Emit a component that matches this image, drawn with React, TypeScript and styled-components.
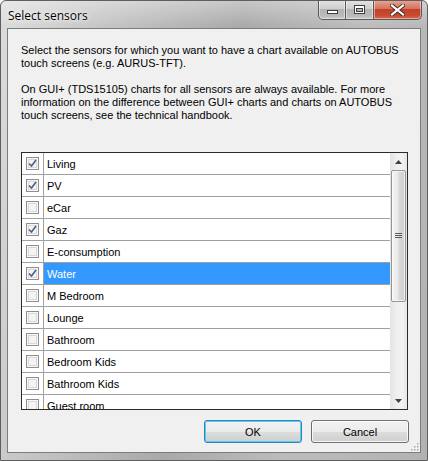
import React from 'react';
import styled, { createGlobalStyle } from 'styled-components';

const GlobalStyle = createGlobalStyle`
  html, body {
    margin: 0;
    padding: 0;
    background: #ffffff;
  }
  body {
    font-family: "Liberation Sans", Arial, sans-serif;
  }
`;

const Window = styled.div`
  position: relative;
  width: 428px;
  height: 461px;
  box-sizing: border-box;
  display: flex;
  flex-direction: column;
  border: 1px solid #5e5e5e;
  border-radius: 6px 6px 0 0;
  overflow: hidden;
  background:
    linear-gradient(180deg, rgba(255, 255, 255, 0.35) 0px, rgba(255, 255, 255, 0) 26px),
    linear-gradient(100deg, #dcdcdc 0%, #c4c4c4 22%, #a9a9a9 48%, #bcbcbc 72%, #b2b2b2 100%);
`;

const TitleBar = styled.div`
  height: 27px;
  display: flex;
  align-items: flex-start;
  flex-shrink: 0;
`;

const Title = styled.div`
  padding: 6px 0 0 7px;
  font-family: "Open Sans", "Liberation Sans", sans-serif;
  font-size: 12px;
  color: #000;
  text-shadow: 0 0 6px rgba(255, 255, 255, 0.95), 0 0 2px rgba(255, 255, 255, 0.9);
`;

const CaptionButtons = styled.div`
  margin: -1px 5px 0 auto;
  display: flex;
  height: 20px;
`;

const CaptionButton = styled.div<{ $kind: 'min' | 'max' | 'close' }>`
  box-sizing: border-box;
  height: 20px;
  width: ${p => (p.$kind === 'close' ? 48 : 28)}px;
  display: flex;
  align-items: center;
  justify-content: center;
  border: 1px solid #5a5a5a;
  border-top: none;
  border-left: ${p => (p.$kind === 'min' ? '1px solid #5a5a5a' : 'none')};
  border-radius: ${p =>
    p.$kind === 'min' ? '0 0 0 5px' : p.$kind === 'close' ? '0 0 5px 0' : '0'};
  box-shadow: inset 0 0 0 1px rgba(255, 255, 255, 0.45);
  background: ${p =>
    p.$kind === 'close'
      ? 'linear-gradient(180deg, #e7a898 0%, #d6735d 45%, #c1412a 50%, #c8492f 80%, #d86a4b 100%)'
      : 'linear-gradient(180deg, #e4e4e4 0%, #cfcfcf 45%, #b4b4b4 50%, #b9b9b9 80%, #c9c9c9 100%)'};
`;

const Client = styled.div`
  position: relative;
  flex: 1;
  margin: 0 6px 7px 6px;
  border: 1px solid #7c7c7c;
  background: #f0f0f0;
  display: flex;
  flex-direction: column;
  padding: 15px 11px 9px 13px;
  box-sizing: border-box;
`;

const Description = styled.div`
  font-size: 11px;
  line-height: 13px;
  color: #000;
  white-space: nowrap;
  margin-bottom: 30px;
`;

const Paragraph = styled.p`
  margin: 0 0 13px 0;
  &:last-child {
    margin-bottom: 0;
  }
`;

const SensorList = styled.div`
  box-sizing: border-box;
  width: 387px;
  height: 258px;
  border: 1px solid #2b2b2b;
  background: #ffffff;
  display: flex;
  overflow: hidden;
`;

const Rows = styled.div`
  flex: 1;
  overflow: hidden;
`;

const Row = styled.div<{ $selected?: boolean }>`
  display: flex;
  height: 22px;
  box-sizing: border-box;
  border-bottom: 1px solid #a0a0a0;
`;

const CheckCell = styled.div`
  width: 21px;
  flex-shrink: 0;
  border-right: 1px solid #a0a0a0;
  display: flex;
  align-items: center;
  justify-content: center;
  background: #ffffff;
`;

const NameCell = styled.div<{ $selected?: boolean }>`
  flex: 1;
  display: flex;
  align-items: center;
  padding-left: 3px;
  font-size: 11px;
  color: ${p => (p.$selected ? '#ffffff' : '#000000')};
  background: ${p => (p.$selected ? '#3399ff' : '#ffffff')};
`;

const CheckBox = styled.div`
  box-sizing: border-box;
  width: 13px;
  height: 13px;
  border: 1px solid #8f8f8f;
  background: #f4f4f4;
  display: flex;
  align-items: center;
  justify-content: center;
  box-shadow: inset 0 0 0 1px #f8f8f8, inset 0 0 0 2px #d8d8d8;
`;

const ScrollBar = styled.div`
  width: 17px;
  flex-shrink: 0;
  display: flex;
  flex-direction: column;
  background: linear-gradient(90deg, #e3e3e3 0%, #efefef 40%, #f2f2f2 70%, #e6e6e6 100%);
`;

const ArrowButton = styled.div`
  height: 17px;
  display: flex;
  align-items: center;
  justify-content: center;
`;

const Track = styled.div`
  flex: 1;
  padding: 0 1px;
`;

const Thumb = styled.div`
  box-sizing: border-box;
  height: 132px;
  border: 1px solid #959595;
  border-radius: 2px;
  background: linear-gradient(90deg, #f3f3f3 0%, #e9e9e9 45%, #d9d9d9 55%, #cfcfcf 100%);
  box-shadow: inset 0 0 0 1px rgba(255, 255, 255, 0.7);
  display: flex;
  align-items: center;
  justify-content: center;
`;

const ButtonRow = styled.div`
  display: flex;
  justify-content: flex-end;
  gap: 9px;
  margin-top: 10px;
`;

const DialogButton = styled.button<{ $default?: boolean }>`
  box-sizing: border-box;
  width: 98px;
  height: 23px;
  padding: 0;
  font-family: "Liberation Sans", Arial, sans-serif;
  font-size: 11px;
  color: #000;
  border-radius: 3px;
  border: 1px solid ${p => (p.$default ? '#3c7fb1' : '#707070')};
  background: linear-gradient(180deg, #f2f2f2 0%, #ebebeb 50%, #dddddd 51%, #cfcfcf 100%);
  box-shadow: inset 0 0 0 1px ${p => (p.$default ? '#48d2fb' : 'rgba(255, 255, 255, 0.8)')};
`;

const Grip = styled.svg`
  position: absolute;
  right: 1px;
  bottom: 1px;
`;

type Sensor = { name: string; checked: boolean; selected?: boolean };

const sensors: Sensor[] = [
  { name: 'Living', checked: true },
  { name: 'PV', checked: true },
  { name: 'eCar', checked: false },
  { name: 'Gaz', checked: true },
  { name: 'E-consumption', checked: false },
  { name: 'Water', checked: true, selected: true },
  { name: 'M Bedroom', checked: false },
  { name: 'Lounge', checked: false },
  { name: 'Bathroom', checked: false },
  { name: 'Bedroom Kids', checked: false },
  { name: 'Bathroom Kids', checked: false },
  { name: 'Guest room', checked: false },
];

const CheckMark = () => (
  <svg width="9" height="9" viewBox="0 0 9 9">
    <path d="M1 4.5 L3.5 7 L8 1" fill="none" stroke="#4d6185" strokeWidth="1.6" />
  </svg>
);

const MinimizeGlyph = () => (
  <svg width="11" height="10" viewBox="0 0 11 10">
    <rect x="0.5" y="5.5" width="10" height="3" fill="#ffffff" stroke="#3c3c3c" />
  </svg>
);

const MaximizeGlyph = () => (
  <svg width="11" height="10" viewBox="0 0 11 10">
    <rect x="0.5" y="0.5" width="10" height="8" fill="#ffffff" stroke="#3c3c3c" />
    <rect x="2.5" y="3.5" width="6" height="3" fill="#b8b8b8" stroke="#3c3c3c" />
  </svg>
);

const CloseGlyph = () => (
  <svg width="15" height="12" viewBox="0 0 15 12">
    <path d="M2 1.5 L13 10.5 M13 1.5 L2 10.5" stroke="#4a2a22" strokeWidth="4" strokeLinecap="square" />
    <path d="M2 1.5 L13 10.5 M13 1.5 L2 10.5" stroke="#ffffff" strokeWidth="2.2" strokeLinecap="square" />
  </svg>
);

const Arrow = ({ up }: { up: boolean }) => (
  <svg width="7" height="4" viewBox="0 0 7 4">
    <path d={up ? 'M0 4 L3.5 0 L7 4 Z' : 'M0 0 L7 0 L3.5 4 Z'} fill="#404040" />
  </svg>
);

const GripLines = () => (
  <svg width="7" height="6" viewBox="0 0 7 6">
    <path d="M0 0.5 H7 M0 2.5 H7 M0 4.5 H7" stroke="#5a5a5a" strokeWidth="1" />
  </svg>
);

const App: React.FC = () => {
  return (
    <>
      <GlobalStyle />
      <Window>
        <TitleBar>
          <Title>Select sensors</Title>
          <CaptionButtons>
            <CaptionButton $kind="min"><MinimizeGlyph /></CaptionButton>
            <CaptionButton $kind="max"><MaximizeGlyph /></CaptionButton>
            <CaptionButton $kind="close"><CloseGlyph /></CaptionButton>
          </CaptionButtons>
        </TitleBar>

        <Client>
          <Description>
            <Paragraph>
              Select the sensors for which you want to have a chart available on AUTOBUS
              <br />
              touch screens (e.g. AURUS-TFT).
            </Paragraph>
            <Paragraph>
              On GUI+ (TDS15105) charts for all sensors are always available. For more
              <br />
              information on the difference between GUI+ charts and charts on AUTOBUS
              <br />
              touch screens, see the technical handbook.
            </Paragraph>
          </Description>

          <SensorList>
            <Rows>
              {sensors.map(s => (
                <Row key={s.name}>
                  <CheckCell>
                    <CheckBox>{s.checked && <CheckMark />}</CheckBox>
                  </CheckCell>
                  <NameCell $selected={s.selected}>{s.name}</NameCell>
                </Row>
              ))}
            </Rows>
            <ScrollBar>
              <ArrowButton><Arrow up /></ArrowButton>
              <Track>
                <Thumb><GripLines /></Thumb>
              </Track>
              <ArrowButton><Arrow up={false} /></ArrowButton>
            </ScrollBar>
          </SensorList>

          <ButtonRow>
            <DialogButton $default>OK</DialogButton>
            <DialogButton>Cancel</DialogButton>
          </ButtonRow>

          <Grip width="9" height="9" viewBox="0 0 9 9">
            {[[7, 1], [4, 4], [7, 4], [1, 7], [4, 7], [7, 7]].map(([x, y]) => (
              <rect key={`${x}-${y}`} x={x} y={y} width="1.5" height="1.5" fill="#a8a8a8" />
            ))}
          </Grip>
        </Client>
      </Window>
    </>
  );
};

export default App;
